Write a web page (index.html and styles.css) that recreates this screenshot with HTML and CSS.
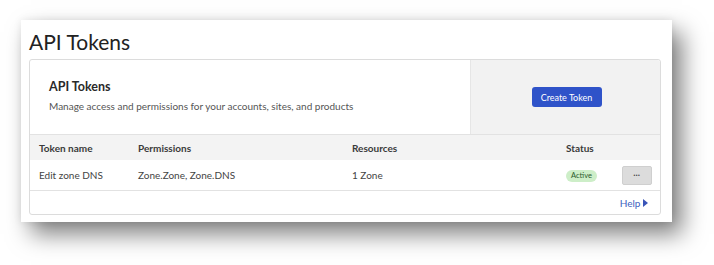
FILE: index.html
```html
<!DOCTYPE html>
<html lang="en">
  <head>
    <meta charset="UTF-8" />
    <meta name="viewport" content="width=device-width, initial-scale=1.0" />
    <title>API Tokens</title>
    <link rel="stylesheet" href="styles.css">
  </head>
  <body>
    <div class="window">
      <h1 class="page-title">API Tokens</h1>

      <div class="card">
        <div class="card-head">
          <div class="card-intro">
            <p class="card-title">API Tokens</p>
            <p class="card-desc">Manage access and permissions for your accounts, sites, and products</p>
          </div>
          <div class="card-action">
            <button class="create-btn">Create Token</button>
          </div>
        </div>

        <div class="row row-head">
          <span>Token name</span>
          <span>Permissions</span>
          <span>Resources</span>
          <span>Status</span>
          <span></span>
        </div>
        <div class="row row-body">
          <span>Edit zone DNS</span>
          <span>Zone.Zone, Zone.DNS</span>
          <span>1 Zone</span>
          <span><span class="badge">Active</span></span>
          <button class="more-btn">&bull;&bull;&bull;</button>
        </div>

        <div class="card-foot">
          <a class="help" href="#">Help <span class="arrow"></span></a>
        </div>
      </div>
    </div>
  </body>
</html>
```

FILE: styles.css
```css
html {
  background-color: #ffffff;
}

body {
  margin: 0;
  min-height: 265px;
  box-sizing: border-box;
  padding: 20px 42px 0 21px;
  font-family: Lato, "Open Sans", Arial, sans-serif;
  color: #333333;
}

.window {
  width: 651px;
  height: 202px;
  box-sizing: border-box;
  padding: 0 11px 8px 8px;
  background-color: #ffffff;
  box-shadow: 0 0 8px rgba(0, 0, 0, 0.08), 10px 12px 22px rgba(0, 0, 0, 0.5);
}

.page-title {
  margin: 0;
  padding-top: 5px;
  height: 34px;
  font-size: 21px;
  font-weight: 400;
  line-height: 34px;
  color: #222222;
}

.card {
  border: 1px solid #dcdcdc;
  border-radius: 3px;
}

.card-head {
  display: flex;
  height: 74px;
  border-bottom: 1px solid #e2e2e2;
}

.card-intro {
  flex: 1;
  padding: 18px 0 0 19px;
}

.card-title {
  margin: 0;
  font-size: 12.5px;
  font-weight: 700;
  line-height: 18px;
  color: #2a2a2a;
}

.card-desc {
  margin: 3px 0 0;
  font-size: 10px;
  line-height: 14px;
  color: #555555;
}

.card-action {
  width: 189px;
  display: flex;
  align-items: center;
  justify-content: center;
  background-color: #f2f2f2;
  border-left: 1px solid #e6e6e6;
  border-radius: 0 3px 0 0;
}

.create-btn {
  width: 70px;
  height: 20px;
  margin-left: 2px;
  padding: 0;
  border: none;
  border-radius: 3px;
  background-color: #2f53c9;
  color: #ffffff;
  font-family: inherit;
  font-size: 9px;
  cursor: pointer;
}

.row {
  display: grid;
  grid-template-columns: 99px 214px 214px 56px 30px;
  align-items: center;
  padding: 0 9px 0 9px;
  font-size: 10px;
}

.row-head {
  height: 25px;
  background-color: #f3f3f3;
  font-weight: 700;
  color: #3a3a3a;
}

.row-body {
  height: 30px;
  border-bottom: 1px solid #e2e2e2;
  color: #444444;
}

.badge {
  display: inline-block;
  padding: 1px 5px;
  border-radius: 7px;
  background-color: #cdeec8;
  color: #2b5a2b;
  font-size: 7.5px;
  line-height: 10px;
}

.more-btn {
  width: 30px;
  height: 19px;
  padding: 0;
  border: 1px solid #cfcfcf;
  border-radius: 2px;
  background-color: #dcdcdc;
  color: #444444;
  font-size: 5px;
  letter-spacing: 0.5px;
  line-height: 1;
}

.card-foot {
  height: 23px;
  display: flex;
  align-items: center;
  justify-content: flex-end;
  padding-right: 12px;
}

.help {
  color: #3d5fc0;
  font-size: 10px;
  text-decoration: none;
}

.arrow {
  display: inline-block;
  width: 0;
  height: 0;
  border-top: 4px solid transparent;
  border-bottom: 4px solid transparent;
  border-left: 5px solid #3a55b8;
}
```
